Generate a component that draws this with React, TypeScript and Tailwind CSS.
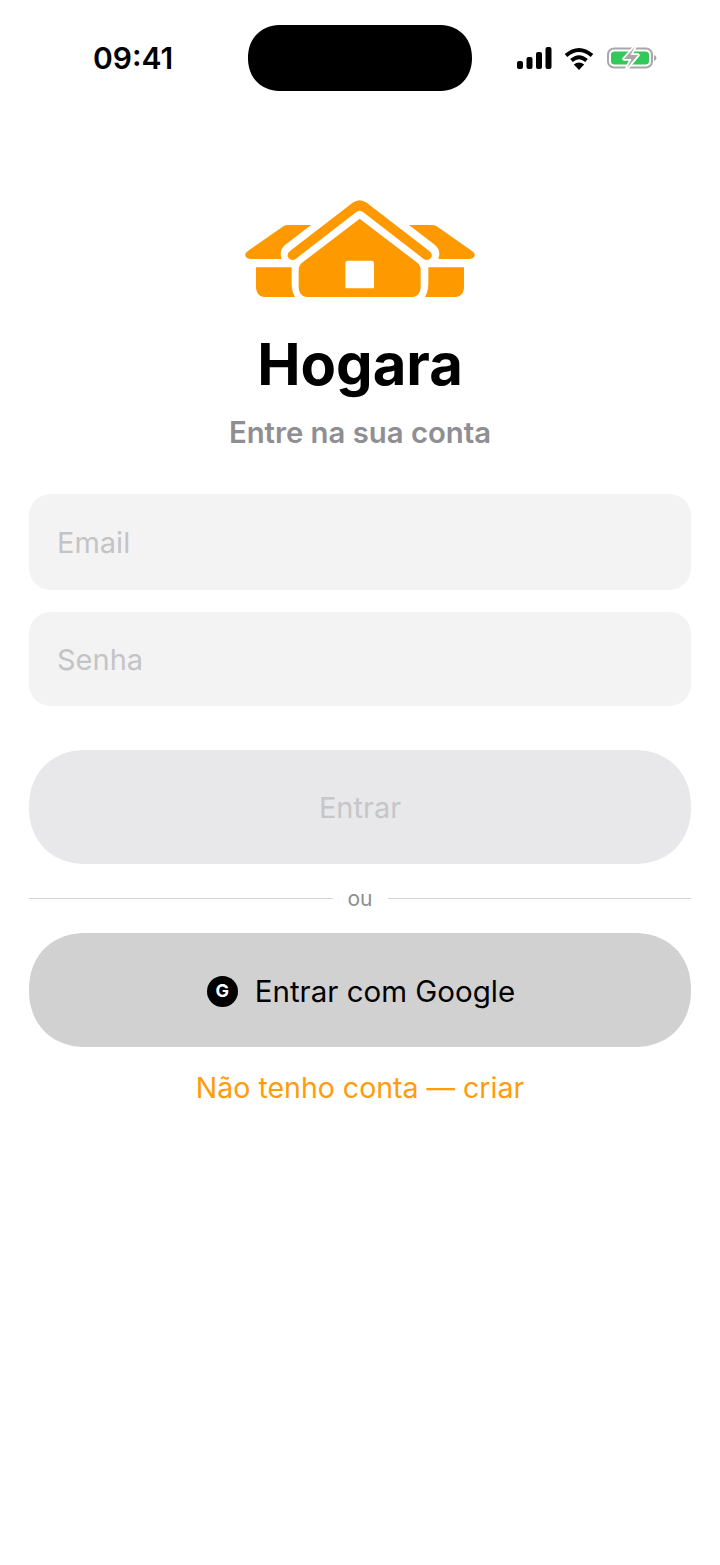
const font = { fontFamily: "Inter, sans-serif" };

function HouseLogo() {
  return (
    <svg width="260" height="125" viewBox="0 0 780 375" fill="#ff9900">
      <path d="M160 124 Q166 120 174 120 L243 120 L165 180 Q146 196 155 222 L62 222 C44 222 40 206 55 197 Z" />
      <path d="M620 124 Q614 120 606 120 L537 120 L615 180 Q634 196 625 222 L718 222 C736 222 740 206 725 197 Z" />
      <path d="M78 247 L185 247 L185 295 Q185 320 195 336 L110 336 Q78 336 78 305 Z" />
      <path d="M702 247 L595 247 L595 295 Q595 320 585 336 L670 336 Q702 336 702 305 Z" />
      <path d="M368 53 Q389 38 410 53 L597 197 Q610 207 603 218 Q593 230 580 221 L400 82 Q389 73 378 82 L198 221 Q185 230 175 218 Q168 207 181 197 Z" />
      <path
        fillRule="evenodd"
        d="M389 101 L560 232 Q572 241 572 255 L572 305 Q572 336 540 336 L238 336 Q206 336 206 305 L206 255 Q206 241 218 232 Z M354 227 Q346 227 346 235 L346 310 L432 310 L432 235 Q432 227 424 227 Z"
      />
    </svg>
  );
}

function StatusIcons() {
  return (
    <div className="flex items-center">
      <svg width="35" height="22" viewBox="0 0 35 22" fill="#000">
        <rect x="0" y="14" width="6" height="8" rx="2" />
        <rect x="9.5" y="10" width="6" height="12" rx="2" />
        <rect x="19" y="5" width="6" height="17" rx="2" />
        <rect x="28.5" y="0" width="6" height="22" rx="2" />
      </svg>
      <svg className="ml-[12px]" width="30" height="23" viewBox="0 0 30 23" fill="none" stroke="#000" strokeWidth="4">
        <path d="M2 8.5 Q15 -2.5 28 8.5" />
        <path d="M7.5 13.5 Q15 7 22.5 13.5" />
        <path d="M15 23 L9.8 17.6 Q15 13.6 20.2 17.6 Z" fill="#000" stroke="none" />
      </svg>
      <svg className="ml-[13px]" width="50" height="24" viewBox="0 0 50 24" fill="none">
        <rect x="1" y="2.5" width="44" height="19" rx="6" stroke="#a8a8a8" strokeWidth="2" />
        <rect x="4" y="5.5" width="38" height="13" rx="3.5" fill="#34c759" />
        <path d="M47 9 Q49.5 10 49.5 12 Q49.5 14 47 15 Z" fill="#a8a8a8" />
        <path
          d="M28 0.7 L17 13 L24.5 13 L20 22 L31 9 L23.5 9 Z"
          fill="#a9a9a9"
          stroke="#fff"
          strokeWidth="3.5"
          paintOrder="stroke"
          strokeLinejoin="round"
        />
      </svg>
    </div>
  );
}

export default function App() {
  return (
    <div style={font} className="min-h-[1565px] bg-white">
      <div className="flex items-center pt-[25px]">
        <div className="w-[248px] pl-[93px] text-[30px] leading-[66px] font-semibold text-black">09:41</div>
        <div className="h-[66px] w-[224px] rounded-[33px] bg-black [corner-shape:superellipse(1.12)]" />
        <div className="pl-[45px]">
          <StatusIcons />
        </div>
      </div>

      <div className="mt-[94px] flex justify-center">
        <HouseLogo />
      </div>

      <div className="px-[29px] flex flex-col">
        <h1 className="mt-[18px] text-center text-[58px] leading-[72px] font-bold text-black">Hogara</h1>
        <p className="mt-[15px] text-center text-[29.3px] leading-[36px] font-semibold text-[#8e8e93]">Entre na sua conta</p>

        <div className="mt-[43px] flex h-[96px] items-center rounded-[24px] bg-[#f3f3f4] px-[28px] pt-[2px] text-[29px] text-[#c4c4c6] [corner-shape:superellipse(1.2)]">
          Email
        </div>
        <div className="mt-[22px] flex h-[94px] items-center rounded-[24px] bg-[#f3f3f4] px-[28px] pt-[2px] text-[29px] text-[#c4c4c6] [corner-shape:superellipse(1.2)]">
          Senha
        </div>

        <button className="mt-[44px] h-[114px] rounded-[57px] bg-[#e8e8ea] pt-[2px] text-[29px] text-[#c6c6c8] [corner-shape:superellipse(1.12)]">
          Entrar
        </button>

        <div className="mt-[22px] flex h-[24px] items-center">
          <div className="h-px flex-1 bg-[#d4d4d6]" />
          <span className="px-[15px] pt-[2px] text-[21px] leading-[24px] text-[#8e8e93]">ou</span>
          <div className="h-px flex-1 bg-[#d4d4d6]" />
        </div>

        <button className="mt-[23px] flex h-[114px] items-center justify-center gap-[17px] rounded-[57px] bg-[#d1d1d1] pl-[2px] pt-[2px] text-[29.5px] text-black [corner-shape:superellipse(1.12)]">
          <span className="flex h-[31px] w-[31px] items-center justify-center rounded-full bg-black text-[18px] leading-none font-bold text-white">
            G
          </span>
          Entrar com Google
        </button>

        <a className="mt-[23px] text-center text-[28.5px] leading-[36px] text-[#ff9c0a]">Não tenho conta — criar</a>
      </div>
    </div>
  );
}
